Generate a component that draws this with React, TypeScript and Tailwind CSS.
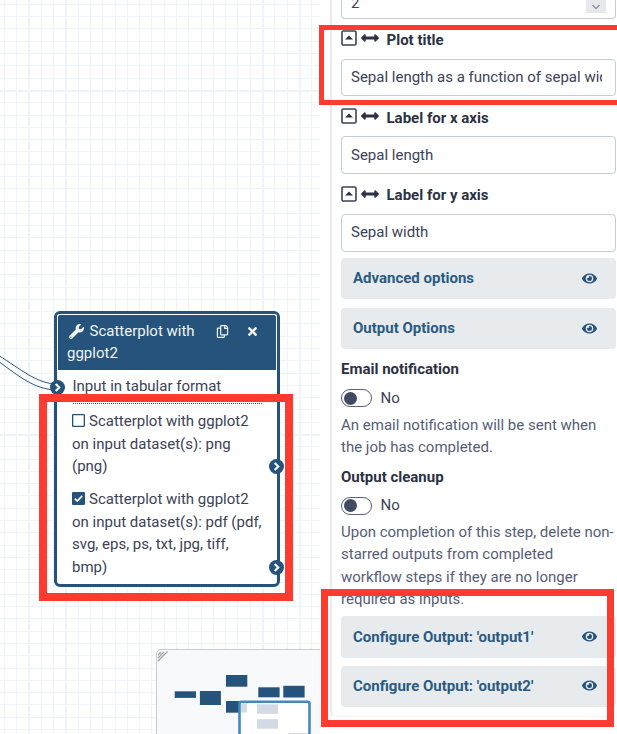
import React from "react";
import { FaWrench, FaRegCopy, FaTimes, FaEye, FaArrowsAltH } from "react-icons/fa";

const MAJOR_X = [29, 66, 263, 300];
const MAJOR_Y = [91, 435];

function Grid() {
  const xs = Array.from({ length: 26 }, (_, i) => Math.floor(4.4 + i * 12.29));
  const ys = Array.from({ length: 60 }, (_, i) => Math.floor(4.4 + i * 12.29));
  const isMajor = (list: number[], v: number) => list.some((m) => Math.abs(m - v) <= 1);
  return (
    <svg className="absolute inset-0" width="320" height="734">
      {ys.map((y) => (
        <rect key={y} x="0" y={y} width="320" height={isMajor(MAJOR_Y, y) ? 2 : 1} fill="#eff4fa" />
      ))}
      {xs.map((x) => (
        <rect key={x} x={x} y="0" width={isMajor(MAJOR_X, x) ? 2 : 1} height="734" fill="#eff4fa" />
      ))}
    </svg>
  );
}

function Terminal({ place }: { place: string }) {
  return (
    <svg className={`absolute ${place}`} width="15" height="15" viewBox="0 0 14 14">
      <circle cx="7" cy="7" r="7" fill="#25537b" />
      <path d="M5.3 3.8 L8.6 7 L5.3 10.2" fill="none" stroke="#fff" strokeWidth="2" />
    </svg>
  );
}

function CheckBox({ checked }: { checked?: boolean }) {
  return (
    <svg className="mr-1 inline-block align-[-1px]" width="13" height="13" viewBox="0 0 13 13">
      <rect x="0.65" y="0.65" width="11.7" height="11.7" rx="0.5" fill={checked ? "#25537b" : "#fff"} stroke="#25537b" strokeWidth="1.3" />
      {checked && <path d="M2.8 6.6 L5.3 9.1 L10.2 3.9" fill="none" stroke="#fff" strokeWidth="1.7" />}
    </svg>
  );
}

function WorkflowNode() {
  return (
    <div className="absolute left-[54px] top-[311px] h-[276px] w-[226px] rounded-[6px] border-[3px] border-[#25537b] bg-white text-[15px] leading-[22.5px] text-[#3c4257]">
      <div className="h-[56px] rounded-t-[3px] border border-b-0 border-white bg-[#25537b] pl-[9px] pr-[17.5px] pt-[5px] text-[#f1f5f8]">
        <div className="flex h-[22px] items-center">
          <FaWrench size={15} className="ml-[1.5px]" />
          <span className="ml-[6px] flex-1">Scatterplot with</span>
          <FaRegCopy size={13} className="mr-[16.5px]" />
          <FaTimes size={13} />
        </div>
        <div>ggplot2</div>
      </div>
      <div className="ml-[15.5px] w-[190px] pt-[5px]">
        <div className="h-[28px] whitespace-nowrap">Input in tabular format</div>
        <div className="mr-px h-px border-t border-dotted border-[#25537b]" />
      </div>
      <div className="ml-[15px] whitespace-nowrap pt-[6px]">
        <p>
          <CheckBox />
          Scatterplot with ggplot2
        </p>
        <p>on input dataset(s): png</p>
        <p>(png)</p>
      </div>
      <div className="ml-[15px] whitespace-nowrap pt-[10.5px]">
        <p>
          <CheckBox checked />
          Scatterplot with ggplot2
        </p>
        <p>on input dataset(s): pdf (pdf,</p>
        <p>svg, eps, ps, txt, jpg, tiff,</p>
        <p>bmp)</p>
      </div>
      <Terminal place="left-[-7px] top-[66px]" />
      <Terminal place="left-[211.5px] top-[144.5px]" />
      <Terminal place="left-[211.5px] top-[245.5px]" />
    </div>
  );
}

function Minimap() {
  return (
    <div className="absolute left-[156px] top-[649px] h-[90px] w-[170px] overflow-hidden rounded-tl-[5px] border border-[#c4ccd6] bg-[#f8f9fb]">
      <svg width="170" height="90" viewBox="157 650 170 90">
        <path d="M158 655l3-3M158 658l6-6M158 661l9.5-9.5" stroke="#a0a0a0" strokeWidth="1.2" />
        <g fill="#25537b">
          <rect x="174.7" y="691.3" width="21.3" height="6.6" />
          <rect x="199.9" y="691" width="21" height="14" />
          <rect x="226" y="675" width="21.3" height="11.7" />
          <rect x="226" y="701" width="21.3" height="11.7" />
          <rect x="258.3" y="687.3" width="21.3" height="10" />
          <rect x="283.3" y="685.8" width="21.3" height="11.7" />
        </g>
        <rect x="239.5" y="701.8" width="70" height="50" rx="2" fill="#fff" stroke="#4389c1" strokeWidth="2.6" />
        <g fill="#d3dae4">
          <rect x="241" y="703.2" width="6" height="9.3" />
          <rect x="257" y="704.3" width="21" height="9.5" />
          <rect x="257" y="719.2" width="21" height="9.5" />
          <rect x="288.5" y="733" width="19.5" height="8" />
        </g>
      </svg>
    </div>
  );
}

function Field({ label, value }: { label: string; value: string }) {
  return (
    <div className="h-[77.8px]">
      <div className="flex h-[40px] items-start pt-[10px] font-bold leading-[22.5px]">
        <svg className="mt-[1.5px]" width="16" height="16" viewBox="0 0 16 16">
          <rect x="1" y="1" width="14" height="14" rx="1.3" fill="none" stroke="#3c4257" strokeWidth="1.6" />
          <path d="M4 9.6L8 5.4L12 9.6Z" fill="#2c3143" />
        </svg>
        <FaArrowsAltH size={18} className="ml-[3.5px] mt-[0.5px]" />
        <span className="ml-[8px] pt-[0.2px]">{label}</span>
      </div>
      <div className="flex h-[37.8px] w-[275px] items-center rounded-[4px] border border-[#c4cdd6] pb-px pl-[9px] pr-[13px] text-[#3c4257]">
        <div className="w-full overflow-hidden whitespace-nowrap">{value}</div>
      </div>
    </div>
  );
}

function Section({ title, className }: { title: string; className: string }) {
  return (
    <div className={`flex w-[275px] items-center justify-between rounded-[4px] bg-[#e7ebee] pl-[12px] pr-[19px] font-bold text-[#2b5a82] ${className}`}>
      <span>{title}</span>
      <FaEye size={15} className="mb-px text-[#25537b]" />
    </div>
  );
}

function Toggle() {
  return (
    <div className="flex h-[22.5px] items-center">
      <div className="flex h-[18px] w-[31px] items-center rounded-full border border-[#565e78] pl-[2px]">
        <div className="h-[13px] w-[13px] rounded-full bg-[#434a62]" />
      </div>
      <span className="ml-[8.5px] text-[#3c4257]">No</span>
    </div>
  );
}

function ToolForm() {
  return (
    <div className="h-[717px] w-[287px] rounded-bl-[5px] border-b border-l-2 border-b-[#f4f5f8] border-l-[#e9ebf0] bg-white pl-[9px]">
      <div className="flex h-[18.6px] w-[275px] items-end justify-between rounded-b-[4px] border border-t-0 border-[#c4cdd6] pl-[9px] pr-[9px]">
        <span className="mb-[3px] text-[#3c4257]">2</span>
        <span className="mb-[5px] flex h-[14px] w-[20px] items-end justify-center bg-[#e7e8ed] pb-[2px]">
          <svg width="10" height="12" viewBox="0 0 10 12">
            <path d="M1.5 6L5 9.5L8.5 6" fill="none" stroke="#92959e" strokeWidth="1.5" />
            <path d="M1.5 0.5H3.5M6.5 0.5H8.5" stroke="#a9abb3" />
          </svg>
        </span>
      </div>
      <Field label="Plot title" value="Sepal length as a function of sepal width" />
      <Field label="Label for x axis" value="Sepal length" />
      <Field label="Label for y axis" value="Sepal width" />
      <Section title="Advanced options" className="mt-[6.5px] h-[40.5px]" />
      <Section title="Output Options" className="mt-[9.5px] h-[40.5px]" />
      <div className="mt-[9.5px] font-bold">Email notification</div>
      <div className="mt-[6px]">
        <Toggle />
      </div>
      <div className="mt-[4.5px] whitespace-nowrap text-[#565d76]">
        <p>An email notification will be sent when</p>
        <p>the job has completed.</p>
      </div>
      <div className="mt-[7px] font-bold">Output cleanup</div>
      <div className="mt-[6px]">
        <Toggle />
      </div>
      <div className="mt-[4px] whitespace-nowrap text-[#565d76]">
        <p>Upon completion of this step, delete non-</p>
        <p>starred outputs from completed</p>
        <p>workflow steps if they are no longer</p>
        <p>required as inputs.</p>
      </div>
      <Section title="Configure Output: 'output1'" className="mt-[5.5px] h-[41.5px]" />
      <Section title="Configure Output: 'output2'" className="mt-[8px] h-[41px]" />
    </div>
  );
}

export default function App() {
  return (
    <div className="relative flex h-[734px] w-[617px] overflow-hidden bg-white font-['Roboto',sans-serif] text-[15px] leading-[22.5px] text-[#2c3143]">
      <div className="relative h-full w-[320px] shrink-0 overflow-hidden">
        <Grid />
        <svg className="absolute inset-0" width="320" height="734" fill="none" stroke="#25537b" strokeWidth="1">
          <path d="M-2 355C22 370 36 383 56 384" />
          <path d="M-2 361C20 377 34 389 56 390" />
        </svg>
        <WorkflowNode />
        <Minimap />
      </div>
      <div className="ml-[10px] shrink-0">
        <ToolForm />
      </div>
      <div className="absolute left-[319px] top-[25px] h-[80px] w-[310px] border-[5.5px] border-[#ff3b30]" />
      <div className="absolute left-[39px] top-[394px] h-[206.5px] w-[254px] border-8 border-[#ff3b30]" />
      <div className="absolute left-[321px] top-[589px] h-[138px] w-[293px] border-[7px] border-[#ff3b30]" />
    </div>
  );
}
